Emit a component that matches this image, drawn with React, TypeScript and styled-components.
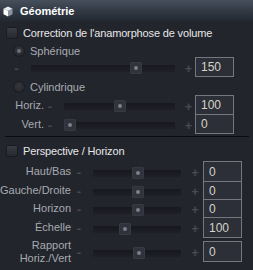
import React from "react";
import styled, { createGlobalStyle } from "styled-components";

const Global = createGlobalStyle`
  html, body { margin: 0; padding: 0; background: #23252c; }
  body { font-family: "Liberation Sans", Arial, sans-serif; font-size: 11px; }
`;

const Panel = styled.div`
  width: 253px;
  height: 270px;
  background: #23252c;
  display: flex;
  flex-direction: column;
  overflow: hidden;
`;

const Header = styled.div`
  height: 22px;
  flex: none;
  display: flex;
  align-items: center;
  gap: 7px;
  padding-left: 3px;
  background: linear-gradient(#46505c 0%, #333b46 45%, #22272f 100%);
  color: #ffffff;
  font-weight: bold;
  font-size: 11px;
`;

const Row = styled.div<{ $mt: number; $h: number; $pl: number }>`
  display: flex;
  align-items: center;
  flex: none;
  height: ${(p) => p.$h}px;
  margin-top: ${(p) => p.$mt}px;
  padding-left: ${(p) => p.$pl}px;
  gap: 5px;
`;

const Checkbox = styled.span`
  width: 12px;
  height: 12px;
  border-radius: 2px;
  box-sizing: border-box;
  background: linear-gradient(#3b3e46, #25272d);
  box-shadow: inset 0 0 0 1px #1a1b20;
`;

const Radio = styled.span<{ $on?: boolean }>`
  position: relative;
  width: 12px;
  height: 12px;
  border-radius: 50%;
  box-sizing: border-box;
  background: radial-gradient(circle at 50% 40%, #34373f, #1f2126);
  box-shadow: inset 0 0 0 1px #1b1c21;
  &::after {
    content: "";
    display: ${(p) => (p.$on ? "block" : "none")};
    position: absolute;
    left: 4px;
    top: 4px;
    width: 4px;
    height: 4px;
    border-radius: 50%;
    background: #6c6f77;
  }
`;

const CheckLabel = styled.span`
  color: #e6e7e9;
  letter-spacing: -0.15px;
`;

const RadioLabel = styled.span`
  color: #a8acb2;
`;

const Separator = styled.div`
  flex: none;
  height: 1px;
  margin: 2px 4px 0 5px;
  background: #0b0c0f;
`;

const SliderRow = styled.div<{ $mt: number; $h: number }>`
  display: flex;
  align-items: center;
  flex: none;
  height: ${(p) => p.$h}px;
  margin-top: ${(p) => p.$mt}px;
`;

const Label = styled.div<{ $w: number }>`
  width: ${(p) => p.$w}px;
  flex: none;
  text-align: right;
  color: #a6aab0;
  line-height: 13px;
`;

const Sign = styled.div<{ $w: number; $ml: number }>`
  width: ${(p) => p.$w}px;
  margin-left: ${(p) => p.$ml}px;
  flex: none;
  display: flex;
  justify-content: center;
  align-items: center;
  height: 8px;
  margin-top: 3px;
  color: #474a52;
  font-weight: bold;
  font-size: 13px;
  line-height: 8px;
`;

const Track = styled.div<{ $w: number; $ml: number }>`
  position: relative;
  flex: none;
  width: ${(p) => p.$w}px;
  margin-left: ${(p) => p.$ml}px;
  margin-top: 3px;
  height: 7px;
  border-radius: 1px;
  background: linear-gradient(#18191e, #1e2025);
`;

const Thumb = styled.div`
  position: absolute;
  top: -3px;
  width: 12px;
  height: 12px;
  box-sizing: border-box;
  border-radius: 2px;
  background: #30333b;
  box-shadow: inset 0 0 0 1px #373a42;
  &::after {
    content: "";
    position: absolute;
    left: 4px;
    top: 4px;
    width: 4px;
    height: 4px;
    border-radius: 50%;
    background: #7d8088;
  }
`;

const ValueBox = styled.div<{ $w: number; $ml: number }>`
  flex: none;
  align-self: stretch;
  width: ${(p) => p.$w}px;
  margin-left: ${(p) => p.$ml}px;
  box-sizing: border-box;
  border: 1px solid #74777e;
  background: #2c2f37;
  color: #d6d3c7;
  font-size: 12px;
  padding-left: 5px;
  display: flex;
  align-items: center;
`;

type Geo = {
  label: number;
  minusW: number;
  minusMl: number;
  trackMl: number;
  track: number;
  plusMl: number;
  plusW: number;
  boxMl: number;
  box: number;
};

const topA: Geo = { label: 10, minusW: 13, minusMl: 0, trackMl: 8, track: 144, plusMl: 7, plusW: 13, boxMl: 0, box: 39 };
const topB: Geo = { label: 44, minusW: 12, minusMl: 0, trackMl: 8, track: 111, plusMl: 7, plusW: 13, boxMl: 0, box: 39 };
const low: Geo = { label: 71, minusW: 12, minusMl: 2, trackMl: 8, track: 88, plusMl: 8, plusW: 12, boxMl: 2, box: 39 };

function Slider({ g, label, pos, value, mt, h }: { g: Geo; label?: React.ReactNode; pos: number; value: string; mt: number; h: number }) {
  const left = Math.round(pos * (g.track - 12));
  return (
    <SliderRow $mt={mt} $h={h}>
      <Label $w={g.label}>{label}</Label>
      <Sign $w={g.minusW} $ml={g.minusMl}>-</Sign>
      <Track $w={g.track} $ml={g.trackMl}>
        <Thumb style={{ left }} />
      </Track>
      <Sign $w={g.plusW} $ml={g.plusMl}>+</Sign>
      <ValueBox $w={g.box} $ml={g.boxMl}>{value}</ValueBox>
    </SliderRow>
  );
}

function Cube() {
  return (
    <svg width="10" height="11" viewBox="0 0 10 11">
      <polygon points="5,0.5 9.5,2.8 5,5 0.5,2.8" fill="#e8ecf0" />
      <polygon points="0.5,2.8 5,5 5,10.5 0.5,8.2" fill="#ffffff" />
      <polygon points="5,5 9.5,2.8 9.5,8.2 5,10.5" fill="#8c96a2" />
    </svg>
  );
}

export default function App() {
  return (
    <>
      <Global />
      <Panel>
        <Header>
          <Cube />
          <span>Géométrie</span>
        </Header>
        <Row $mt={5} $h={12} $pl={6}>
          <Checkbox />
          <CheckLabel>Correction de l'anamorphose de volume</CheckLabel>
        </Row>
        <Row $mt={6} $h={12} $pl={13}>
          <Radio $on />
          <RadioLabel>Sphérique</RadioLabel>
        </Row>
        <Slider g={topA} pos={0.75} value="150" mt={0} h={20} />
        <Row $mt={4} $h={12} $pl={13}>
          <Radio />
          <RadioLabel>Cylindrique</RadioLabel>
        </Row>
        <Slider g={topB} label="Horiz." pos={0.5} value="100" mt={2} h={20} />
        <Slider g={topB} label="Vert." pos={0} value="0" mt={-1} h={20} />
        <Separator />
        <Row $mt={8} $h={12} $pl={6}>
          <Checkbox />
          <CheckLabel>Perspective / Horizon</CheckLabel>
        </Row>
        <Slider g={low} label="Haut/Bas" pos={0.51} value="0" mt={4} h={21} />
        <Slider g={low} label="Gauche/Droite" pos={0.51} value="0" mt={-1} h={19} />
        <Slider g={low} label="Horizon" pos={0.51} value="0" mt={-1} h={19} />
        <Slider g={low} label="Échelle" pos={0.34} value="100" mt={-1} h={21} />
        <Slider
          g={low}
          label={
            <>
              Rapport
              <br />
              Horiz./Vert
            </>
          }
          pos={0.53}
          value="0"
          mt={3}
          h={21}
        />
      </Panel>
    </>
  );
}
